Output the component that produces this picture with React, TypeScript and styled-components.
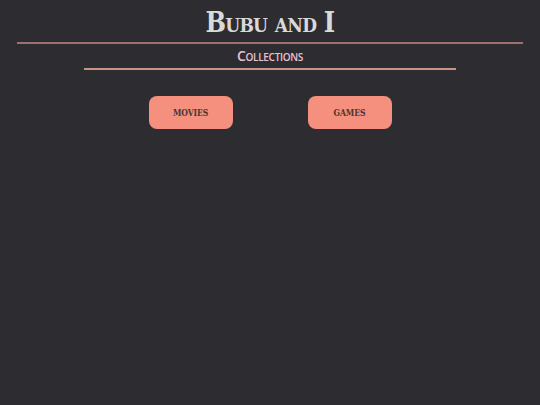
import styled, { createGlobalStyle } from "styled-components";

const GlobalStyle = createGlobalStyle`
  html, body {
    margin: 0;
    padding: 0;
    background: #2d2c31;
  }
  body {
    font-family: "DejaVu Sans", sans-serif;
    min-height: 405px;
  }
`;

const Page = styled.div`
  display: flex;
  flex-direction: column;
  align-items: center;
  padding: 4px 17px 0;
`;

const Title = styled.h1`
  margin: 0;
  font-family: "DejaVu Serif Condensed", "DejaVu Serif", serif;
  font-stretch: condensed;
  font-variant: small-caps;
  font-weight: bold;
  font-size: 27px;
  line-height: 38px;
  color: #d9d9d9;
  letter-spacing: -0.8px;
`;

const Rule = styled.hr<{ width: number; color: string }>`
  width: ${(p) => p.width}px;
  margin: 0;
  border: none;
  border-top: 2px solid ${(p) => p.color};
`;

const SubTitle = styled.h2`
  margin: 0;
  font-family: "Open Sans", sans-serif;
  font-variant: small-caps;
  font-weight: 600;
  font-size: 14px;
  line-height: 24px;
  color: #e9c4d0;
  letter-spacing: -0.3px;
`;

const ButtonRow = styled.div`
  display: flex;
  gap: 75px;
  margin-top: 26px;
`;

const CollectionButton = styled.button`
  width: 84px;
  height: 33px;
  border: none;
  border-radius: 8px;
  background: #f4907d;
  color: #4a3533;
  font-family: "DejaVu Serif Condensed", "DejaVu Serif", serif;
  font-stretch: condensed;
  font-weight: bold;
  font-size: 8.5px;
  letter-spacing: -0.1px;
  cursor: pointer;
`;

export default function App() {
  return (
    <>
      <GlobalStyle />
      <Page>
        <Title>Bubu and I</Title>
        <Rule width={506} color="#9e7070" />
        <SubTitle>Collections</SubTitle>
        <Rule width={372} color="#cc9384" />
        <ButtonRow>
          <CollectionButton>MOVIES</CollectionButton>
          <CollectionButton>GAMES</CollectionButton>
        </ButtonRow>
      </Page>
    </>
  );
}
